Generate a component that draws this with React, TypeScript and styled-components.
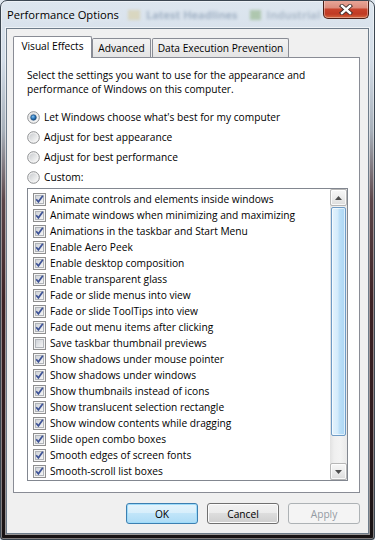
import React from "react";
import styled, { createGlobalStyle } from "styled-components";

const effects: { label: string; checked: boolean }[] = [
  { label: "Animate controls and elements inside windows", checked: true },
  { label: "Animate windows when minimizing and maximizing", checked: true },
  { label: "Animations in the taskbar and Start Menu", checked: true },
  { label: "Enable Aero Peek", checked: true },
  { label: "Enable desktop composition", checked: true },
  { label: "Enable transparent glass", checked: true },
  { label: "Fade or slide menus into view", checked: true },
  { label: "Fade or slide ToolTips into view", checked: true },
  { label: "Fade out menu items after clicking", checked: true },
  { label: "Save taskbar thumbnail previews", checked: false },
  { label: "Show shadows under mouse pointer", checked: true },
  { label: "Show shadows under windows", checked: true },
  { label: "Show thumbnails instead of icons", checked: true },
  { label: "Show translucent selection rectangle", checked: true },
  { label: "Show window contents while dragging", checked: true },
  { label: "Slide open combo boxes", checked: true },
  { label: "Smooth edges of screen fonts", checked: true },
  { label: "Smooth-scroll list boxes", checked: true },
];

const presets = [
  "Let Windows choose what's best for my computer",
  "Adjust for best appearance",
  "Adjust for best performance",
  "Custom:",
];

const GlobalStyle = createGlobalStyle`
  html, body {
    margin: 0;
    padding: 0;
    background: #dfe7ef;
  }
  body {
    width: 375px;
    height: 540px;
    overflow: hidden;
    font-family: "Open Sans", "Noto Sans", sans-serif;
    font-size: 10.2px;
    color: #000;
  }
`;

const Window = styled.div`
  box-sizing: border-box;
  width: 375px;
  height: 540px;
  display: flex;
  flex-direction: column;
  padding: 0 5px 5px;
  border: 1px solid #3b4651;
  border-radius: 7px 7px 3px 3px;
  overflow: hidden;
  background: linear-gradient(
    to bottom,
    #dde6ef 0px,
    #d3dde8 60px,
    #a7b0ba 130px,
    #5b4549 200px,
    #3d2225 300px,
    #2e1b1e 440px,
    #161213 540px
  );
  box-shadow: inset 0 0 0 1px rgba(255, 255, 255, 0.45);
`;

const TitleBar = styled.div`
  height: 27px;
  display: flex;
  align-items: center;
  padding-left: 1px;
  white-space: nowrap;
`;

const Title = styled.span`
  flex-shrink: 0;
  font-size: 11.2px;
  line-height: 14px;
  text-shadow: 0 0 6px rgba(255, 255, 255, 0.9);
`;

const Blur = styled.span<{ $color: string; $w?: number; $gap?: number }>`
  flex-shrink: 0;
  display: inline-block;
  margin-left: ${(p) => p.$gap ?? 6}px;
  color: ${(p) => p.$color};
  background: ${(p) => (p.$w ? p.$color : "transparent")};
  width: ${(p) => (p.$w ? `${p.$w}px` : "auto")};
  height: ${(p) => (p.$w ? "10px" : "auto")};
  font-size: 11px;
  font-weight: 700;
  filter: blur(1.6px);
  opacity: 0.4;
`;

const CloseButton = styled.div`
  box-sizing: border-box;
  flex-shrink: 0;
  width: 46px;
  height: 19px;
  margin-left: auto;
  align-self: flex-start;
  margin-top: -1px;
  display: flex;
  align-items: center;
  justify-content: center;
  border: 1px solid #4b1f17;
  border-top: none;
  border-radius: 0 0 5px 5px;
  background: linear-gradient(
    to bottom,
    #e9a99b 0%,
    #dd8d7d 42%,
    #c8432c 52%,
    #c03a24 78%,
    #d4673f 100%
  );
  box-shadow: inset 0 0 0 1px rgba(255, 255, 255, 0.35);
`;

const Client = styled.div`
  box-sizing: border-box;
  flex: 1;
  display: flex;
  flex-direction: column;
  padding: 7px 8px 0 6px;
  background: #f0f0f0;
  border: 1px solid #6e7c8a;
  box-shadow: 0 0 0 1px rgba(255, 255, 255, 0.55);
`;

const TabRow = styled.div`
  height: 22px;
  display: flex;
  align-items: flex-end;
  margin-bottom: -1px;
  position: relative;
  z-index: 1;
`;

const Tab = styled.div<{ $active?: boolean; $width: number; $offset?: number }>`
  box-sizing: border-box;
  width: ${(p) => p.$width}px;
  height: ${(p) => (p.$active ? 22 : 19)}px;
  margin-left: ${(p) => p.$offset ?? 0}px;
  margin-bottom: ${(p) => (p.$active ? 0 : 1)}px;
  padding-bottom: ${(p) => (p.$active ? 3 : 0)}px;
  display: flex;
  align-items: center;
  justify-content: center;
  border: 1px solid #898c95;
  border-bottom: none;
  border-radius: 2px 2px 0 0;
  background: ${(p) =>
    p.$active ? "#fff" : "linear-gradient(to bottom, #f3f3f3, #e4e4e4)"};
  white-space: nowrap;
`;

const Panel = styled.div`
  box-sizing: border-box;
  height: 436px;
  padding: 10px 11px 11px 13px;
  display: flex;
  flex-direction: column;
  background: #fff;
  border: 1px solid #898c95;
`;

const Description = styled.p`
  margin: 0;
  line-height: 14px;
  white-space: nowrap;
`;

const RadioGroup = styled.div`
  margin-top: 11px;
  display: flex;
  flex-direction: column;
`;

const OptionRow = styled.label`
  height: 20px;
  display: flex;
  align-items: center;
  gap: 4px;
  white-space: nowrap;
`;

const ListBox = styled.div`
  box-sizing: border-box;
  height: 293px;
  margin-top: 1px;
  display: flex;
  border: 1px solid #828790;
`;

const List = styled.div`
  flex: 1;
  padding-top: 2px;
  display: flex;
  flex-direction: column;
`;

const ListRow = styled.label`
  height: 16px;
  flex-shrink: 0;
  display: flex;
  align-items: center;
  gap: 4px;
  padding-left: 5px;
  white-space: nowrap;
`;

const Scrollbar = styled.div`
  width: 17px;
  display: flex;
  flex-direction: column;
  background: linear-gradient(
    to right,
    #e2e2e2 0%,
    #efefef 25%,
    #f3f3f3 60%,
    #e9e9e9 100%
  );
`;

const ArrowButton = styled.div`
  box-sizing: border-box;
  height: 17px;
  display: flex;
  align-items: center;
  justify-content: center;
  border: 1px solid #b6b6b6;
  border-radius: 2px;
  background: linear-gradient(to bottom, #f7f7f7 0%, #ececec 50%, #dcdcdc 100%);
  box-shadow: inset 0 0 0 1px rgba(255, 255, 255, 0.8);
`;

const Track = styled.div`
  flex: 1;
  padding: 1px 1px 27px;
  display: flex;
`;

const Thumb = styled.div`
  box-sizing: border-box;
  flex: 1;
  border: 1px solid #6e9bc6;
  border-radius: 2px;
  background: linear-gradient(
    to right,
    #e4f3fd 0%,
    #d3ebfb 45%,
    #bde0f8 55%,
    #abd6f4 100%
  );
  box-shadow: inset 0 0 0 1px rgba(255, 255, 255, 0.6);
`;

const ButtonRow = styled.div`
  margin-top: 10px;
  display: flex;
  justify-content: flex-end;
  gap: 9px;
`;

const Button = styled.div<{ $variant?: "default" | "disabled" }>`
  box-sizing: border-box;
  width: 72px;
  height: 21px;
  display: flex;
  align-items: center;
  justify-content: center;
  border-radius: 3px;
  border: 1px solid
    ${(p) =>
      p.$variant === "default"
        ? "#3c7fb1"
        : p.$variant === "disabled"
        ? "#adb2b5"
        : "#707070"};
  color: ${(p) => (p.$variant === "disabled" ? "#949ba3" : "#000")};
  background: ${(p) =>
    p.$variant === "default"
      ? "linear-gradient(to bottom, #e5f4fc 0%, #d6eefb 50%, #c1e5f9 50%, #addcf6 100%)"
      : p.$variant === "disabled"
      ? "#f4f4f4"
      : "linear-gradient(to bottom, #f2f2f2 0%, #ebebeb 50%, #dddddd 50%, #cfcfcf 100%)"};
  box-shadow: ${(p) =>
    p.$variant === "default"
      ? "inset 0 0 0 1px #9fdcfa"
      : p.$variant === "disabled"
      ? "none"
      : "inset 0 0 0 1px #fcfcfc"};
`;

const CloseGlyph = () => (
  <svg width="14" height="11" viewBox="0 0 14 11">
    <path d="M3 2 L11 9 M11 2 L3 9" stroke="#3a2a28" strokeWidth="4.2" strokeLinecap="square" />
    <path d="M3 2 L11 9 M11 2 L3 9" stroke="#fff" strokeWidth="2.4" strokeLinecap="square" />
  </svg>
);

const CheckBox = ({ checked }: { checked: boolean }) => (
  <svg width="13" height="13" viewBox="0 0 13 13">
    <defs>
      <linearGradient id="cbFill" x1="0" y1="0" x2="1" y2="1">
        <stop offset="0" stopColor="#cdd1d6" />
        <stop offset="1" stopColor="#f7f7f7" />
      </linearGradient>
    </defs>
    <rect x="0.5" y="0.5" width="12" height="12" fill="#f4f4f4" stroke="#8f8f8f" />
    <rect x="2.5" y="2.5" width="8" height="8" fill="url(#cbFill)" stroke="#b1b5ba" />
    {checked && (
      <path
        d="M3.2 6.2 L5.4 8.8 L9.8 2.8"
        fill="none"
        stroke="#3d5296"
        strokeWidth="1.7"
      />
    )}
  </svg>
);

const Radio = ({ selected }: { selected: boolean }) => (
  <svg width="13" height="13" viewBox="0 0 13 13">
    <defs>
      <linearGradient id="rbFill" x1="0" y1="0" x2="1" y2="1">
        <stop offset="0" stopColor="#c9cccf" />
        <stop offset="1" stopColor="#fafafa" />
      </linearGradient>
      <radialGradient id="rbDot" cx="0.4" cy="0.35" r="0.7">
        <stop offset="0" stopColor="#8ec5ef" />
        <stop offset="0.5" stopColor="#2f7cc0" />
        <stop offset="1" stopColor="#123f6e" />
      </radialGradient>
    </defs>
    <circle cx="6.5" cy="6.5" r="5.8" fill="#f4f4f4" stroke="#8c8e90" />
    <circle cx="6.5" cy="6.5" r="4.2" fill="url(#rbFill)" />
    {selected && <circle cx="6.5" cy="6.5" r="2.8" fill="url(#rbDot)" stroke="#1c4d7c" strokeWidth="0.6" />}
  </svg>
);

const Arrow = ({ down }: { down?: boolean }) => (
  <svg width="7" height="4" viewBox="0 0 7 4">
    <polygon points={down ? "0,0 7,0 3.5,4" : "0,4 7,4 3.5,0"} fill="#4e4e4e" />
  </svg>
);

export default function App() {
  return (
    <>
      <GlobalStyle />
      <Window>
        <TitleBar>
          <Title>Performance Options</Title>
          <Blur $color="#d7c27d" $w={12} $gap={9} />
          <Blur $color="#4f6a8c">Latest Headlines</Blur>
          <Blur $color="#6d9c52" $w={11} $gap={12} />
          <Blur $color="#6a7f99">Industrial</Blur>
          <CloseButton>
            <CloseGlyph />
          </CloseButton>
        </TitleBar>
        <Client>
          <TabRow>
            <Tab $active $width={79}>
              Visual Effects
            </Tab>
            <Tab $width={59}>Advanced</Tab>
            <Tab $width={137} $offset={1}>
              Data Execution Prevention
            </Tab>
          </TabRow>
          <Panel>
            <Description>
              Select the settings you want to use for the appearance and
              <br />
              performance of Windows on this computer.
            </Description>
            <RadioGroup>
              {presets.map((label, i) => (
                <OptionRow key={label}>
                  <Radio selected={i === 0} />
                  {label}
                </OptionRow>
              ))}
            </RadioGroup>
            <ListBox>
              <List>
                {effects.map((e) => (
                  <ListRow key={e.label}>
                    <CheckBox checked={e.checked} />
                    {e.label}
                  </ListRow>
                ))}
              </List>
              <Scrollbar>
                <ArrowButton>
                  <Arrow />
                </ArrowButton>
                <Track>
                  <Thumb />
                </Track>
                <ArrowButton>
                  <Arrow down />
                </ArrowButton>
              </Scrollbar>
            </ListBox>
          </Panel>
          <ButtonRow>
            <Button $variant="default">OK</Button>
            <Button>Cancel</Button>
            <Button $variant="disabled">Apply</Button>
          </ButtonRow>
        </Client>
      </Window>
    </>
  );
}
